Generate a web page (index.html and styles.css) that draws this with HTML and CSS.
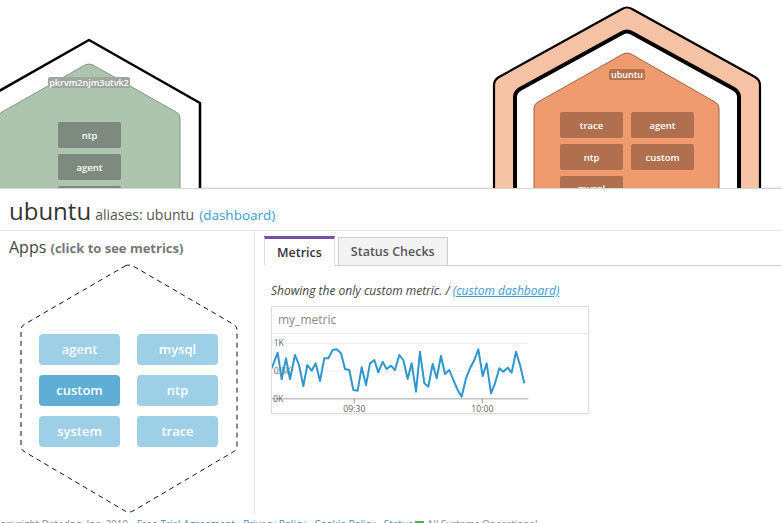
FILE: index.html
```html
<!DOCTYPE html>
<html>
<head>
<meta charset="utf-8">
<link rel="stylesheet" href="styles.css">
</head>
<body>
<div class="map">
  <svg class="map-canvas" width="782" height="188" viewBox="0 0 782 188">
    <polygon points="89,40 200,103 200,200 -22,200 -22,103" fill="#fff" stroke="#000" stroke-width="2.5" stroke-linejoin="round"/>
    <path d="M-2,200 L-2,118 Q-2,114 2,112 L85,65 Q89,63 93,65 L176,112 Q180,114 180,118 L180,200 Z" fill="#adc4ae" stroke="#7f9a80" stroke-width="1"/>
    <rect x="48" y="77" width="82" height="11" rx="2" fill="#9ea89e"/>
    <text class="node-label" x="89" y="85.5">pkrvm2njm3utvk2</text>
    <rect x="58" y="122" width="63" height="26" rx="2" fill="#7f8a7e"/>
    <text class="node-app" x="89.5" y="138.5">ntp</text>
    <rect x="58" y="154" width="63" height="26" rx="2" fill="#7f8a7e"/>
    <text class="node-app" x="89.5" y="170.5">agent</text>
    <rect x="58" y="186" width="63" height="26" rx="2" fill="#7f8a7e"/>
    <text class="node-app" x="89.5" y="202.5">custom</text>

    <path d="M494,200 L494,85 Q494,80 499,77 L622,9 Q627,6 632,9 L755,77 Q760,80 760,85 L760,200 Z" fill="#f6c2a6" stroke="#000" stroke-width="2.2"/>
    <path d="M515,200 L515,97 Q515,92 520,89 L622,33 Q627,30 632,33 L734,89 Q739,92 739,97 L739,200 Z" fill="#fff" stroke="#000" stroke-width="4"/>
    <path d="M534,200 L534,108 Q534,104 538,102 L623,54 Q627,52 631,54 L715,102 Q719,104 719,108 L719,200 Z" fill="#ef9b6f" stroke="#9c6347" stroke-width="1"/>
    <rect x="609" y="69" width="36" height="11" rx="2" fill="#b8714f"/>
    <text class="node-label" x="627" y="77.5">ubuntu</text>
    <rect x="560" y="112" width="63" height="26" rx="2" fill="#b06f4f"/>
    <text class="node-app" x="591.5" y="128.5">trace</text>
    <rect x="631" y="112" width="63" height="26" rx="2" fill="#b06f4f"/>
    <text class="node-app" x="662.5" y="128.5">agent</text>
    <rect x="560" y="144" width="63" height="26" rx="2" fill="#b06f4f"/>
    <text class="node-app" x="591.5" y="160.5">ntp</text>
    <rect x="631" y="144" width="63" height="26" rx="2" fill="#b06f4f"/>
    <text class="node-app" x="662.5" y="160.5">custom</text>
    <rect x="560" y="176" width="63" height="26" rx="2" fill="#b06f4f"/>
    <text class="node-app" x="591.5" y="192">mysql</text>
  </svg>
</div>

<div class="panel">
  <div class="host-header">
    <span class="host-name">ubuntu</span>
    <span class="aliases">aliases: ubuntu</span>
    <a class="link">(dashboard)</a>
  </div>
  <div class="host-body">
    <div class="apps-col">
      <div class="apps-title">Apps <span class="hint">(click to see metrics)</span></div>
      <div class="apps-hex">
        <svg class="hex-outline" width="254" height="252" viewBox="0 0 254 252">
          <path d="M125,3 Q129,1 133,3 L233,61 Q237,63 237,67 L237,183 Q237,187 233,189 L133,248 Q129,250 125,248 L25,189 Q21,187 21,183 L21,67 Q21,63 25,61 Z" fill="none" stroke="#111" stroke-width="1" stroke-dasharray="5 4"/>
        </svg>
        <div class="app-grid">
          <div class="app">agent</div>
          <div class="app">mysql</div>
          <div class="app app-active">custom</div>
          <div class="app">ntp</div>
          <div class="app">system</div>
          <div class="app">trace</div>
        </div>
      </div>
    </div>
    <div class="metrics-col">
      <div class="tabs">
        <div class="tab tab-active">Metrics</div>
        <div class="tab">Status Checks</div>
      </div>
      <div class="tab-content">
        <p class="note">Showing the only custom metric. / <a class="link underline">(custom dashboard)</a></p>
        <div class="graph-card">
          <div class="graph-title">my_metric</div>
          <svg class="graph" width="316" height="79" viewBox="21 102 948 237">
            <line x1="20" y1="130" x2="790" y2="130" stroke="#ececec" stroke-width="3"/>
            <line x1="20" y1="213" x2="790" y2="213" stroke="#ececec" stroke-width="3"/>
            <line x1="20" y1="296" x2="790" y2="296" stroke="#c4c4c4" stroke-width="4.5"/>
            <line x1="268" y1="296" x2="268" y2="310" stroke="#999" stroke-width="3"/>
            <line x1="652" y1="296" x2="652" y2="310" stroke="#999" stroke-width="3"/>
            <text class="axis" x="26" y="139">1K</text>
            <text class="axis" x="26" y="222">0.5K</text>
            <text class="axis" x="24" y="305">0K</text>
            <text class="axis mid" x="268" y="336">09:30</text>
            <text class="axis mid" x="652" y="336">10:00</text>
            <polyline fill="none" stroke="#2f96cf" stroke-width="6" stroke-linejoin="round" points="20,205 38,158 50,238 63,175 75,238 90,165 102,195 115,258 127,195 140,212 152,190 165,243 178,175 190,175 203,150 215,148 228,160 240,207 253,210 265,270 278,272 290,202 303,255 315,190 328,180 340,217 353,185 365,207 378,197 390,210 403,165 415,180 428,237 440,190 453,275 465,155 478,250 490,260 503,192 515,235 528,168 540,222 553,210 565,240 578,270 590,290 603,235 615,205 628,180 640,148 653,228 665,190 678,280 690,250 703,205 715,215 728,203 740,218 753,155 765,195 778,250"/>
          </svg>
        </div>
      </div>
    </div>
  </div>
  <div class="footer">Copyright Datadog, Inc. 2019 - <a class="flink">Free-Trial Agreement</a> - <a class="flink">Privacy Policy</a> - <a class="flink">Cookie Policy</a> - <a class="flink">Status</a> <span class="status-dot"></span> All Systems Operational</div>
</div>
</body>
</html>
```

FILE: styles.css
```css
html, body {
  margin: 0;
  padding: 0;
}
body {
  width: 782px;
  height: 523px;
  overflow: hidden;
  background: #fff;
  font-family: "Open Sans", "Noto Sans", sans-serif;
  color: #333;
}
.map {
  height: 188px;
  overflow: hidden;
}
.map-canvas {
  display: block;
}
.node-label {
  font-family: "Open Sans", sans-serif;
  font-size: 9px;
  font-weight: 600;
  fill: #fff;
  text-anchor: middle;
}
.node-app {
  font-family: "Open Sans", sans-serif;
  font-size: 9.5px;
  font-weight: 600;
  fill: #fff;
  text-anchor: middle;
}
.panel {
  border-top: 1px solid #d4d4d4;
  box-shadow: 0 -1px 2px rgba(0,0,0,0.08);
  background: #fff;
}
.host-header {
  box-sizing: border-box;
  height: 42px;
  border-bottom: 1px solid #e6e6e6;
  padding: 7px 0 0 9px;
  display: flex;
  align-items: baseline;
  line-height: 30px;
}
.host-name {
  font-size: 24px;
  color: #333;
  margin-right: 4px;
}
.aliases {
  font-size: 14px;
  color: #555;
  margin-right: 5px;
}
.link {
  color: #3a9ad6;
  font-size: 13px;
}
.host-header .link {
  font-size: 13.5px;
}
.host-body {
  display: flex;
  height: 284px;
}
.apps-col {
  width: 254px;
  border-right: 1px solid #e8e8e8;
}
.apps-title {
  padding: 6px 0 0 9px;
  font-size: 16px;
  line-height: 20px;
  color: #444;
}
.hint {
  font-size: 13px;
  font-weight: 700;
  color: #777;
}
.apps-hex {
  position: relative;
  margin-top: 5px;
  height: 252px;
}
.hex-outline {
  position: absolute;
  left: 0;
  top: 0;
}
.app-grid {
  position: relative;
  display: grid;
  grid-template-columns: 81px 81px;
  grid-auto-rows: 31px;
  column-gap: 17px;
  row-gap: 10px;
  padding: 71px 0 0 39px;
}
.app {
  background: #9dcfe7;
  color: #fff;
  border-radius: 4px;
  font-size: 13px;
  font-weight: 600;
  text-align: center;
  line-height: 31px;
}
.app-active {
  background: #5eaed6;
}
.metrics-col {
  flex: 1;
  padding: 5px 0 0 9px;
}
.tabs {
  display: flex;
  align-items: flex-end;
  gap: 3px;
  height: 30px;
  box-sizing: border-box;
  border-bottom: 1px solid #cfcfcf;
}
.tab {
  box-sizing: border-box;
  height: 29px;
  margin-bottom: -1px;
  padding: 0 12px;
  border: 1px solid #cfcfcf;
  background: #f3f3f3;
  font-size: 12.5px;
  font-weight: 600;
  color: #555;
  line-height: 28px;
}
.tab-active {
  height: 30px;
  padding: 0 12px;
  border-top: 3px solid #7a4fa9;
  border-left: 1px solid #dcdcdc;
  border-right: 1px solid #dcdcdc;
  border-bottom: 1px solid #fff;
  background: #fff;
  color: #333;
  line-height: 28px;
}
.tab-content {
  padding-left: 7px;
}
.note {
  margin: 17px 0 7px 0;
  font-size: 12px;
  line-height: 16px;
  font-style: italic;
  color: #444;
}
.underline {
  font-size: 12px;
  text-decoration: underline;
}
.graph-card {
  width: 318px;
  box-sizing: border-box;
  border: 1px solid #dddddd;
  box-shadow: 0 1px 2px rgba(0,0,0,0.06);
}
.graph-title {
  height: 27px;
  box-sizing: border-box;
  border-bottom: 1px solid #e8e8e8;
  padding-left: 6px;
  font-size: 12px;
  line-height: 26px;
  color: #888;
}
.graph {
  display: block;
}
.axis {
  font-family: "Open Sans", sans-serif;
  font-size: 26px;
  fill: #666;
}
.mid {
  text-anchor: middle;
}
.footer {
  height: 8px;
  overflow: hidden;
  margin-left: -6px;
  padding-top: 2px;
  white-space: nowrap;
  font-size: 10px;
  line-height: 14px;
  color: #888;
}
.flink {
  color: #3a8cc4;
}
.status-dot {
  display: inline-block;
  width: 9px;
  height: 9px;
  background: #4caf50;
  vertical-align: middle;
}
```
